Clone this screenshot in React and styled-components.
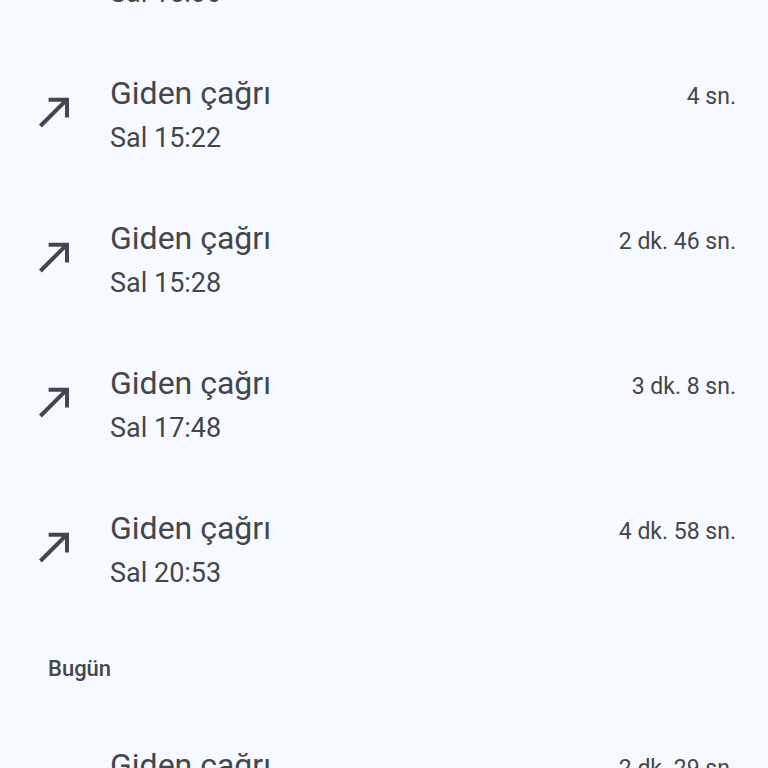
import React from 'react';
import styled, { createGlobalStyle } from 'styled-components';

const GlobalStyle = createGlobalStyle`
  body {
    margin: 0;
    background: #f6f9ff;
  }
`;

const Screen = styled.main`
  height: 100vh;
  overflow: hidden;
  background: #f6f9ff;
  color: #43474b;
  font-family: Roboto, 'Liberation Sans', sans-serif;
`;

// the history is scrolled, so the first call starts above the top edge
const History = styled.div`
  margin-top: -102px;
`;

const CallList = styled.ul`
  list-style: none;
  margin: 0;
  padding: 0;
`;

const CallRow = styled.li`
  display: flex;
  align-items: flex-start;
  padding: 28px 32px 26px 36px;
`;

const ArrowIcon = styled.svg`
  flex: none;
  width: 36px;
  height: 36px;
  margin-top: 23px;
  margin-right: 38px;
`;

const CallInfo = styled.div`
  flex: 1;
`;

const CallType = styled.div`
  font-size: 32px;
  line-height: 44px;
`;

const CallTime = styled.div`
  font-size: 27px;
  line-height: 47px;
`;

const Duration = styled.div`
  font-size: 23px;
  line-height: 52px;
`;

const DayHeader = styled.h2`
  margin: 0;
  padding: 30px 48px;
  font-size: 22px;
  font-weight: 500;
  line-height: 32px;
`;

const tuesday = [
  { time: 'Sal 15:06', duration: '3 sn.' },
  { time: 'Sal 15:22', duration: '4 sn.' },
  { time: 'Sal 15:28', duration: '2 dk. 46 sn.' },
  { time: 'Sal 17:48', duration: '3 dk. 8 sn.' },
  { time: 'Sal 20:53', duration: '4 dk. 58 sn.' },
];

const today = [{ time: '10:12', duration: '2 dk. 29 sn.' }];

const Calls = ({ calls }) => (
  <CallList>
    {calls.map(({ time, duration }) => (
      <CallRow key={time}>
        <ArrowIcon viewBox="0 0 36 36" fill="none" stroke="#43474b" strokeWidth="4" aria-hidden="true">
          <path d="M4.4 32L30.6 5.8M12.6 5.8H31V23.6" />
        </ArrowIcon>
        <CallInfo>
          <CallType>Giden çağrı</CallType>
          <CallTime>{time}</CallTime>
        </CallInfo>
        <Duration>{duration}</Duration>
      </CallRow>
    ))}
  </CallList>
);

const App = () => (
  <Screen>
    <GlobalStyle />
    <History>
      <Calls calls={tuesday} />
      <DayHeader>Bugün</DayHeader>
      <Calls calls={today} />
    </History>
  </Screen>
);

export default App;
